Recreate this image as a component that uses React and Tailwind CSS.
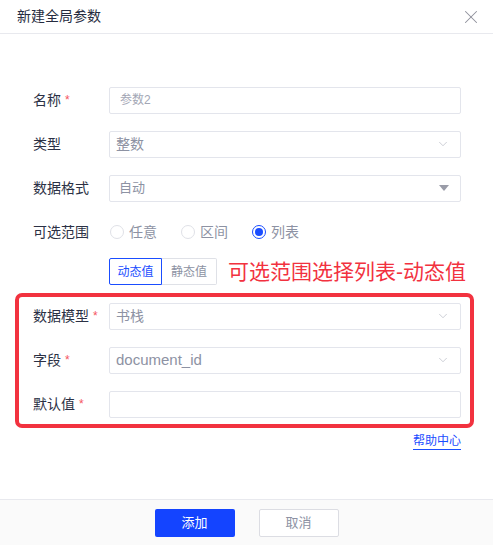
import { X, ChevronDown } from "lucide-react";

const font = { fontFamily: '"Liberation Sans", "Noto Sans CJK SC", sans-serif' };

function Label({ text, required }) {
  return (
    <div className="w-[76px] shrink-0 flex items-center text-[14px] text-[#2b3145]">
      <span>{text}</span>
      {required && <span className="ml-[4px] text-[12px] text-[#f5555f]">*</span>}
    </div>
  );
}

function Row({ label, required, children }) {
  return (
    <div className="h-[44px] flex items-center">
      <Label text={label} required={required} />
      <div className="flex-1">{children}</div>
    </div>
  );
}

function Select({ value, caret, className = "" }) {
  return (
    <div className="h-[27px] border border-[#e3e5ec] rounded-[2px] flex items-center justify-between pl-[6px] pr-[10px] bg-white">
      <span className={"text-[#8d92a3] " + className}>{value}</span>
      {caret ? (
        <span className="w-0 h-0 border-l-[5px] border-r-[5px] border-t-[6px] border-l-transparent border-r-transparent border-t-[#9a9ca8] mr-[1px]" />
      ) : (
        <ChevronDown size={14} strokeWidth={1} className="text-[#a9acb8]" />
      )}
    </div>
  );
}

function Radio({ label, checked }) {
  return (
    <div className="flex items-center gap-[5px]">
      {checked ? (
        <span className="w-[14px] h-[14px] rounded-full border border-[#1a4dff] flex items-center justify-center">
          <span className="w-[8px] h-[8px] rounded-full bg-[#1a4dff]" />
        </span>
      ) : (
        <span className="w-[14px] h-[14px] rounded-full border border-[#dfe1e7]" />
      )}
      <span className="text-[14px] text-[#8d92a3]">{label}</span>
    </div>
  );
}

export default function App() {
  return (
    <div className="h-[545px] bg-white flex flex-col" style={font}>
      <div className="h-[34px] shrink-0 border-b border-[#e8e9ee] flex items-center justify-between pl-[17px] pr-[11px]">
        <span className="text-[14px] text-[#262c40]">新建全局参数</span>
        <X size={22} strokeWidth={1.1} className="text-[#8e909b]" />
      </div>

      <div className="flex-1 pt-[44px] pl-[33px] pr-[32px]">
        <Row label="名称" required>
          <div className="h-[27px] border border-[#e3e5ec] rounded-[2px] flex items-center pl-[10px]">
            <span className="text-[12px] text-[#a3a7b5]">参数2</span>
          </div>
        </Row>
        <Row label="类型">
          <Select value="整数" className="text-[14px]" />
        </Row>
        <Row label="数据格式">
          <Select value="自动" caret className="text-[13px] pl-[3px]" />
        </Row>
        <Row label="可选范围">
          <div className="flex items-center gap-[24px] pl-[1px]">
            <Radio label="任意" />
            <Radio label="区间" />
            <Radio label="列表" checked />
          </div>
        </Row>
        <div className="flex items-center mt-[4px] mb-[9px] pl-[76px]">
          <div className="flex h-[27px] text-[12px] shrink-0">
            <div className="w-[53px] border border-[#1a4dff] rounded-l-[2px] text-[#1a4dff] flex items-center justify-center">
              动态值
            </div>
            <div className="w-[55px] border border-l-0 border-[#dfe1e7] rounded-r-[2px] text-[#8d92a3] flex items-center justify-center">
              静态值
            </div>
          </div>
          <span className="ml-[11px] text-[21px] leading-none whitespace-nowrap text-[#f2323f]">可选范围选择列表-动态值</span>
        </div>

        <div className="relative">
          <div className="absolute -left-[18px] -right-[13px] -top-[1px] -bottom-[2px] border-[4px] border-[#f2323f] rounded-[7px] pointer-events-none" />
          <Row label="数据模型" required>
            <Select value="书栈" className="text-[14px]" />
          </Row>
          <Row label="字段" required>
            <Select value="document_id" className="text-[15px]" />
          </Row>
          <Row label="默认值" required>
            <div className="h-[27px] border border-[#e3e5ec] rounded-[2px]" />
          </Row>
        </div>

        <div className="flex justify-end mt-[7px]">
          <span className="text-[12px] leading-[16px] text-[#1a4dff] border-b border-[#1a4dff]">帮助中心</span>
        </div>
      </div>

      <div className="h-[46px] shrink-0 border-t border-[#e8e9ee] bg-[#fafafa] flex items-center justify-center gap-[24px]">
        <button className="w-[80px] h-[28px] rounded-[2px] bg-[#1444ff] text-white text-[13px]">添加</button>
        <button className="w-[80px] h-[28px] rounded-[2px] bg-white border border-[#dcdde3] text-[#8d92a3] text-[13px]">取消</button>
      </div>
    </div>
  );
}
